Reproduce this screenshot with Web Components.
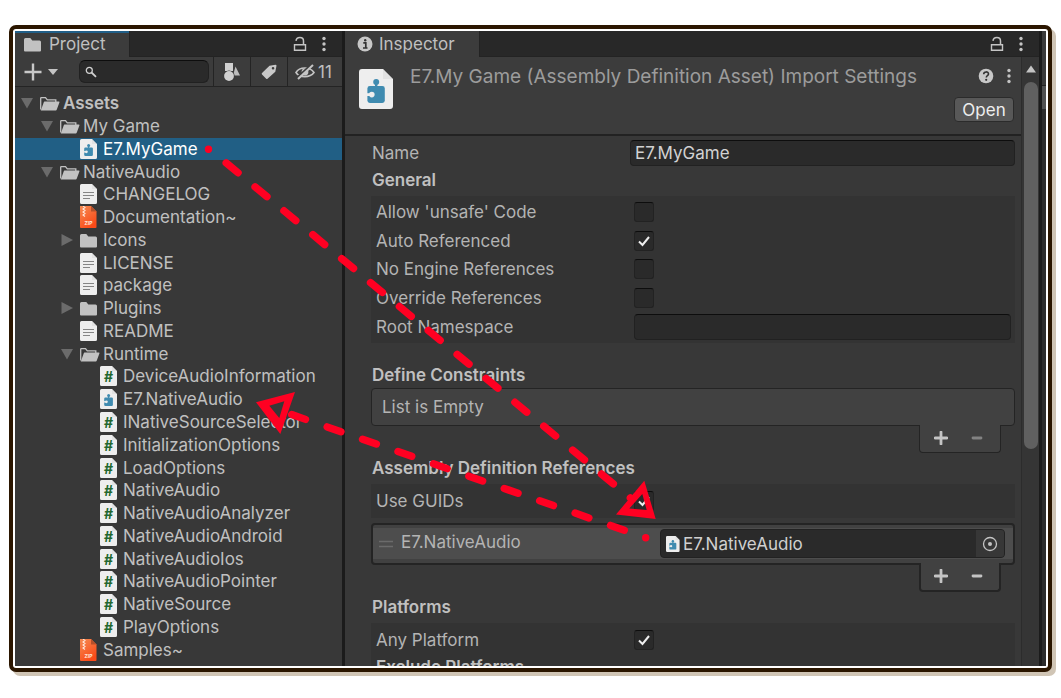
<!DOCTYPE html>
<html lang="en">
<head>
<meta charset="utf-8">
<title>Project and Inspector</title>
<style>
html { background: #fff; }
body { margin: 0; font: 17px/20px Inter, "Liberation Sans", sans-serif; color: #c0c0c0; }
</style>
</head>
<body>
<editor-frame>
  <dock-panel slot="left" class="project" name="Project" icon="folder" active>
    <project-tools slot="tools"></project-tools>
    <tree-view>
      <tree-row depth="0" icon="open" fold="down" strong>Assets</tree-row>
      <tree-row depth="1" icon="open" fold="down">My Game</tree-row>
      <tree-row depth="2" icon="asmdef" selected>E7.MyGame</tree-row>
      <tree-row depth="1" icon="open" fold="down">NativeAudio</tree-row>
      <tree-row depth="2" icon="text">CHANGELOG</tree-row>
      <tree-row depth="2" icon="zip">Documentation~</tree-row>
      <tree-row depth="2" icon="folder" fold="right">Icons</tree-row>
      <tree-row depth="2" icon="text">LICENSE</tree-row>
      <tree-row depth="2" icon="text">package</tree-row>
      <tree-row depth="2" icon="folder" fold="right">Plugins</tree-row>
      <tree-row depth="2" icon="text">README</tree-row>
      <tree-row depth="2" icon="open" fold="down">Runtime</tree-row>
      <tree-row depth="3" icon="script">DeviceAudioInformation</tree-row>
      <tree-row depth="3" icon="asmdef">E7.NativeAudio</tree-row>
      <tree-row depth="3" icon="script">INativeSourceSelector</tree-row>
      <tree-row depth="3" icon="script">InitializationOptions</tree-row>
      <tree-row depth="3" icon="script">LoadOptions</tree-row>
      <tree-row depth="3" icon="script">NativeAudio</tree-row>
      <tree-row depth="3" icon="script">NativeAudioAnalyzer</tree-row>
      <tree-row depth="3" icon="script">NativeAudioAndroid</tree-row>
      <tree-row depth="3" icon="script">NativeAudioIos</tree-row>
      <tree-row depth="3" icon="script">NativeAudioPointer</tree-row>
      <tree-row depth="3" icon="script">NativeSource</tree-row>
      <tree-row depth="3" icon="script">PlayOptions</tree-row>
      <tree-row depth="2" icon="zip">Samples~</tree-row>
    </tree-view>
  </dock-panel>
  <dock-panel slot="main" name="Inspector" icon="info">
    <scroll-area>
      <asset-header>E7.My Game (Assembly Definition Asset) Import Settings</asset-header>
      <inspector-body>
        <prop-row wide label="Name" type="text" value="E7.MyGame"></prop-row>
        <section-title>General</section-title>
        <prop-group class="general">
          <prop-row label="Allow 'unsafe' Code" type="check"></prop-row>
          <prop-row label="Auto Referenced" type="check" checked></prop-row>
          <prop-row label="No Engine References" type="check"></prop-row>
          <prop-row label="Override References" type="check"></prop-row>
          <prop-row label="Root Namespace" type="text"></prop-row>
        </prop-group>
        <section-title spaced>Define Constraints</section-title>
        <list-box empty>List is Empty</list-box>
        <section-title>Assembly Definition References</section-title>
        <prop-group>
          <prop-row label="Use GUIDs" type="check" checked></prop-row>
        </prop-group>
        <list-box class="refs"><reference-item name="E7.NativeAudio"></reference-item></list-box>
        <section-title>Platforms</section-title>
        <prop-group>
          <prop-row label="Any Platform" type="check" checked></prop-row>
          <sub-title>Exclude Platforms</sub-title>
        </prop-group>
      </inspector-body>
    </scroll-area>
  </dock-panel>
  <flow-arrows slot="over"></flow-arrows>
</editor-frame>

<script>
const PAGE = '<path d="M1.500 0H12l5 5v13.500a1.500 1.500 0 0 1-1.500 1.500h-14A1.500 1.500 0 0 1 0 18.500v-17A1.500 1.500 0 0 1 1.500 0z" fill="#eee"/><path d="M12 0l5 5h-5z" fill="#d6d6d6" opacity=".5"/>';
const PUZZLE = '<g fill="#3f8bb0"><rect x="4.200" y="8.500" width="8.700" height="8.500" rx="1.200"/><path d="M8 6h1.200v3H8z"/><circle cx="8.600" cy="6.500" r="1.500"/></g><circle cx="6.400" cy="12.800" r="1.400" fill="#eee"/><path d="M4 12.100h2.200v1.400H4z" fill="#eee"/>';
const ICONS = {
  folder: [20, 20, '<path d="M0 5.500A1.500 1.500 0 0 1 1.500 4h4.800l2 2.500h7.200A1.500 1.500 0 0 1 17 8v8.500a1 1 0 0 1-1 1H1a1 1 0 0 1-1-1z" fill="#c2c2c2"/>'],
  open: [20, 20, '<path d="M.7 16.500V5.200a.6.600 0 0 1 .6-.6h4.200l1.800 2.200h8.500V9" fill="none" stroke="#c2c2c2" stroke-width="1.300"/><path d="M4.500 8.500h14.200a.8.800 0 0 1 .7 1.100l-2.700 7.200a1 1 0 0 1-1 .7H.8l3-8.300a1 1 0 0 1 .7-.7z" fill="#c2c2c2"/>'],
  text: [20, 20, PAGE + '<path d="M3 8.500h11M3 11.500h11M3 14.500h7" stroke="#858585" stroke-width="1.200"/>'],
  asmdef: [20, 20, PAGE + PUZZLE],
  script: [20, 20, PAGE + '<text x="8.500" y="15.500" text-anchor="middle" font-family="Inter,sans-serif" font-weight="700" font-size="14" fill="#23682f">#</text>'],
  zip: [20, 22, '<defs><linearGradient id="g" x2=".6" y2="1"><stop offset="0" stop-color="#f58b52"/><stop offset="1" stop-color="#fa4a18"/></linearGradient></defs><path d="M0 0h11l5.500 5.500V21a1 1 0 0 1-1 1H1a1 1 0 0 1-1-1z" fill="url(#g)"/><path d="M11 0l5.500 5.500H11z" fill="#b5502a"/><path d="M3 0l2 1.500-2 1.500 2 1.500-2 1.500 2 1.500-2 1.500 2 1.500" fill="none" stroke="#ffe6da" stroke-width="1.100"/><text x="8.500" y="18.500" text-anchor="middle" font-family="Inter,sans-serif" font-weight="700" font-size="5" fill="#ffe9df">ZIP</text>'],
  info: [16, 16, '<circle cx="8" cy="8" r="7.500" fill="#c8c8c8"/><path d="M6.300 6.800h2.500v5M6 12h4.500" stroke="#333" stroke-width="1.700" fill="none"/><circle cx="8.200" cy="4.200" r="1.200" fill="#333"/>'],
  help: [16, 16, '<circle cx="8" cy="8" r="7.300" fill="#c8c8c8"/><path d="M5.700 6.200c0-3 4.800-3 4.800-.2 0 1.700-2.200 1.700-2.200 3.400" stroke="#333" stroke-width="1.600" fill="none"/><circle cx="8.200" cy="11.800" r="1.100" fill="#333"/>'],
  lock: [14, 16, '<path d="M1.500 8.700h11v5.600h-11z" fill="none" stroke="#c4c4c4" stroke-width="1.400"/><path d="M3 4.800C3.500.5 10.500.5 10.500 5v3.500" fill="none" stroke="#c4c4c4" stroke-width="1.500"/>'],
  dots: [6, 16, '<g fill="#c4c4c4"><circle cx="3" cy="2.500" r="1.700"/><circle cx="3" cy="8" r="1.700"/><circle cx="3" cy="13.500" r="1.700"/></g>'],
  plus: [18, 18, '<path d="M9 .5v17M.5 9h17" stroke="#c8c8c8" stroke-width="2.400"/>'],
  drop: [12, 8, '<path d="M1 1h10L6 7z" fill="#c4c4c4"/>'],
  search: [12, 12, '<circle cx="4.300" cy="4.300" r="3" fill="none" stroke="#d0d0d0" stroke-width="1.300"/><path d="M6.500 6.500l4.500 4.300" stroke="#d0d0d0" stroke-width="1.800"/>'],
  kinds: [18, 20, '<path d="M2 1h8v8H2z" fill="#d0d0d0"/><path d="M12.500 4.500l4.500 9h-7z" fill="#bdbdbd"/><circle cx="6" cy="14" r="5.600" fill="#383838"/><circle cx="6" cy="14" r="4.900" fill="#d0d0d0"/>'],
  tag: [16, 16, '<path fill-rule="evenodd" d="M8.500 1.800L14.500.7a1 1 0 0 1 1 1l-1.200 6-7.800 7.100a1 1 0 0 1-1.300 0L1 10.500a1 1 0 0 1 0-1.400zM12 3a1.300 1.300 0 1 0 .1 2.600A1.300 1.300 0 0 0 12 3z" fill="#c8c8c8"/>'],
  eye: [20, 18, '<path d="M1 9.500C4.500 3.500 15 3.500 19 9.500 15 15 4.500 15 1 9.500z" fill="none" stroke="#c4c4c4" stroke-width="1.600"/><circle cx="10" cy="9" r="3.400" fill="#c4c4c4"/><path d="M1.500 15L17 1" stroke="#3c3c3c" stroke-width="2"/><path d="M3 16L18 2" stroke="#c4c4c4" stroke-width="2"/>'],
  add: [14, 14, '<path d="M7 1v12M1 7h12" stroke="#c4c4c4" stroke-width="2.800" stroke-linecap="round"/>'],
  minus: [12, 14, '<path d="M2 7h8" stroke="#c4c4c4" stroke-width="2.800" stroke-linecap="round"/>'],
  pick: [16, 16, '<circle cx="8" cy="8" r="6.500" fill="none" stroke="#c4c4c4" stroke-width="1.300"/><circle cx="8" cy="8" r="2" fill="#c4c4c4"/>'],
  grip: [14, 8, '<path d="M0 1.500h14M0 6.500h14" stroke="#6b6b6b" stroke-width="1.400"/>'],
  check: [14, 12, '<path d="M2 6.500l3.500 3.500L12 2" fill="none" stroke="#eee" stroke-width="2"/>'],
  up: [12, 8, '<path d="M1 7.500h10L6 .5z" fill="#c4c4c4"/>'],
  down: [14, 14, '<path d="M1 2h12L7 12.500z" fill="#6b6b6b"/>'],
  right: [14, 14, '<path d="M1.500 1v12L13 7z" fill="#6b6b6b"/>']
};
const icon = (name, w, h) => {
  const [vw, vh, body] = ICONS[name];
  return `<svg aria-hidden="true" width="${w || vw}" height="${h || vh}" viewBox="0 0 ${vw} ${vh}">${body}</svg>`;
};
const BASE = `*{box-sizing:border-box} svg{display:block;flex:none}
button{appearance:none;border:0;background:none;padding:0;margin:0;font:inherit;color:inherit;display:flex;align-items:center;justify-content:center}
input{font:inherit;color:inherit;margin:0}
input[type=text],input[type=search]{appearance:none;width:100%;min-width:0;border:1px solid #212121;border-top-color:#0d0d0d;border-radius:4px;background:#2a2a2a;outline:0}`;
const define = (tag, css, html) => customElements.define(tag, class extends HTMLElement {
  connectedCallback() {
    if (this.shadowRoot) return;
    const root = this.attachShadow({ mode: 'open' });
    root.innerHTML = `<style>${BASE}${css}</style>` + (typeof html === 'function' ? html(this) : html);
  }
});

define('editor-frame', `
:host{display:grid;position:relative;grid-template-columns:327px 3px minmax(0,1fr) 3px 4px;height:calc(100vh - 51px);min-height:560px;margin:25px 9px 26px;border:4px solid #2b1600;border-radius:7px;padding:2px;background:#fff;box-shadow:4px 4px 0 #d0c5b5;box-sizing:border-box}
::slotted(dock-panel){min-height:0;overflow:hidden}
.sep{background:#1b1b1b}
.next{display:grid;grid-template-rows:55px 23px 1fr;background:#2c2c2c}
.next i:first-child{background:#3a3a3a;border-bottom:1px solid #222}
.next i+i{background:#505050}`,
`<slot name="left"></slot><div class="sep"></div><slot name="main"></slot><div class="sep"></div><div class="next"><i></i><i></i></div><slot name="over"></slot>`);

define('dock-panel', `
:host{display:flex;flex-direction:column;background:#383838;min-width:0}
.tabs{display:flex;height:26px;flex:none;background:#282828;border-bottom:1px solid #232323}
.tab{gap:5px;padding:0 24px 0 9px;background:#3c3c3c;height:26px;box-shadow:inset 0 2px var(--mark,transparent);border-right:1px solid #232323}
:host([active]){--mark:#215f88}
:host(:not([active])) .tab{gap:6px;padding-left:12px}
.end{margin-left:auto;display:flex;align-items:center;gap:14px;padding-right:15px}
.body{flex:1;min-height:0;display:flex;flex-direction:column}`,
el => `<div class="tabs"><button class="tab">${icon(el.getAttribute('icon'))}${el.getAttribute('name')}</button>
<div class="end"><button aria-label="Lock">${icon('lock')}</button><button aria-label="Menu">${icon('dots')}</button></div></div>
<slot name="tools"></slot><div class="body"><slot></slot></div>`);

define('project-tools', `
:host{display:flex;flex:none;height:30px;background:#3c3c3c;border-bottom:1px solid #242424;box-sizing:border-box}
.add{gap:5px;padding-left:9px;width:46px;justify-content:flex-start}
.search{display:grid;flex:1;margin:3px 4px 3px 18px;align-items:center}
.search>*{grid-area:1/1}
.search svg{margin-left:6px}
input[type=search]{height:23px;border-radius:6px}
.cell{width:37px;border-left:1px solid #242424}
.hidden{width:55px;gap:3px;justify-content:flex-start;padding-left:7px}`,
`<button class="add" aria-label="Create">${icon('plus')}${icon('drop')}</button>
<div class="search"><input type="search" aria-label="Search">${icon('search')}</div>
<button class="cell" aria-label="Search by type">${icon('kinds')}</button><button class="cell" aria-label="Search by label">${icon('tag')}</button><button class="cell hidden">${icon('eye')}11</button>`);

define('tree-view', `
:host{display:grid;flex:1;min-height:0;grid-auto-rows:minmax(20px,1fr);padding:5px 0 5px}`,
`<slot></slot>`);

define('tree-row', `
:host{display:flex;align-items:center;min-height:0;white-space:nowrap}
:host([selected]){background:#215f85;color:#fff}
:host([strong]){font-weight:600}
.row{display:flex;align-items:center;padding-left:calc(var(--depth)*20px + 5px)}
.fold{width:20px;flex:none}
.text{padding-left:3px}`,
el => `<style>:host{--depth:${el.getAttribute('depth')}}</style><div class="row"><div class="fold">${el.hasAttribute('fold') ? icon(el.getAttribute('fold')) : ''}</div>${icon(el.getAttribute('icon'))}<span class="text"><slot></slot></span></div>`);

define('scroll-area', `
:host{display:grid;flex:1;min-height:0;grid-template-columns:minmax(0,1fr) 18px}
.view{min-height:0;overflow:hidden}
.bar{display:flex;flex-direction:column;align-items:center;background:#353535;border-left:1px solid #2c2c2c;padding-top:8px;gap:9px;min-height:0}
.thumb{width:14px;height:64%;max-height:367px;margin-left:1px;border-radius:7px;background:#606060}
.bar button{height:8px}`,
`<div class="view"><slot></slot></div><div class="bar"><button aria-label="Scroll up">${icon('up')}</button><div class="thumb"></div></div>`);

define('asset-header', `
:host{display:grid;grid-template-columns:34px minmax(0,1fr) auto;column-gap:17px;height:79px;background:#3c3c3c;border-bottom:2px solid #222;padding:12px 7px 0 14px;box-sizing:border-box}
h1{margin:-4px 0 0;font-size:19px;line-height:24px;font-weight:400;color:#9c9c9c;white-space:nowrap}
.side{display:flex;flex-direction:column;align-items:flex-end;gap:13px}
.acts{display:flex;gap:12px;padding-right:2px}
.open{width:60px;height:25px;border:1px solid #2b2b2b;border-radius:4px;background:#585858;color:#eee}
.side{margin-top:-1px}`,
`${icon('asmdef', 40, 40)}<h1><slot></slot></h1><div class="side"><div class="acts"><button aria-label="Help">${icon('help')}</button><button aria-label="More">${icon('dots')}</button></div><button class="open">Open</button></div>`);

define('inspector-body', `:host{display:block;padding:4px 6px 0 26px}`, `<slot></slot>`);
define('section-title', `:host{display:block;font-weight:600;padding:1px 1px 3px}:host([spaced]){padding:19px 1px 0}h2{margin:0;font:inherit;line-height:26px}`, `<h2><slot></slot></h2>`);
define('sub-title', `:host{display:block;font-weight:600;padding-left:5px}h3{margin:0;font:inherit;line-height:24px}`, `<h3><slot></slot></h3>`);
define('prop-group', `
:host{display:grid;grid-auto-rows:minmax(30px,auto);background:#333;padding:2px 0;box-sizing:border-box}
:host(.general){grid-auto-rows:1fr;min-height:147px}`, `<slot></slot>`);

let uid = 0;
define('prop-row', `
:host{display:grid;grid-template-columns:258px minmax(0,1fr);align-items:center;padding:0 4px 0 5px;color:#b4b4b4}
:host([wide]){padding:0 0 0 1px}
input[type=text]{height:26px;padding:0 4px;color:#d2d2d2}
.box{display:grid;width:20px;height:20px;place-items:center}
.box>*{grid-area:1/1}
input[type=checkbox]{appearance:none;width:20px;height:20px;border:1px solid #222;border-top-color:#0d0d0d;border-radius:3px;background:#2a2a2a}
svg{display:none;pointer-events:none}
input:checked+svg{display:block}`,
el => {
  const id = 'f' + (++uid);
  const control = el.getAttribute('type') === 'text'
    ? `<input type="text" id="${id}" value="${el.getAttribute('value') || ''}">`
    : `<span class="box"><input type="checkbox" id="${id}" ${el.hasAttribute('checked') ? 'checked' : ''}>${icon('check')}</span>`;
  return `<label for="${id}">${el.getAttribute('label')}</label>${control}`;
});

define('list-box', `
:host{display:block;padding-bottom:1px;color:#b4b4b4}
:host(.refs){padding-top:5px}
.list{min-height:38px;border:1px solid #242424;border-radius:4px;background:#414141;padding:8px 10px}
:host(.refs) .list{border-width:2px;padding:3px 0 4px}
.foot{display:flex;position:relative;justify-content:space-between;width:82px;height:28px;margin:-1px 14px 0 auto;padding:0 17px 2px 14px;border:1px solid #242424;border-top:0;border-radius:0 0 4px 4px;background:#414141}
:host(.refs) .foot{border-width:0 2px 2px;margin-top:-2px;height:29px;padding:0 16px 1px 13px}
button:disabled{opacity:.5}`,
el => `<div class="list"><slot></slot></div><div class="foot"><button aria-label="Add">${icon('add')}</button><button aria-label="Remove" ${el.hasAttribute('empty') ? 'disabled' : ''}>${icon('minus')}</button></div>`);

define('reference-item', `
:host{display:grid;grid-template-columns:14px 251px minmax(0,1fr);column-gap:8px;align-items:center;height:31px;background:#4d4d4d;padding:0 8px 0 6px;box-sizing:border-box}
label{padding-bottom:4px}
.field{display:grid;grid-template-columns:auto minmax(0,1fr) 28px;align-items:center;height:29px;border:1px solid #222;border-radius:4px;background:#2a2a2a;color:#d0d0d0;padding-left:5px;overflow:hidden}
.field button{height:27px;background:#373737}
.field input[type=text]{border:0;height:24px;padding:0 1px;background:none}`,
el => `${icon('grip')}<label for="ref">${el.getAttribute('name')}</label><div class="field">${icon('asmdef', 16, 16)}<input type="text" id="ref" readonly value="${el.getAttribute('name')}"><button aria-label="Select object">${icon('pick')}</button></div>`);

define('flow-arrows', `
:host{position:absolute;inset:-4px auto auto -4px;pointer-events:none}`,
`<svg aria-hidden="true" width="700" height="560" viewBox="9 25 700 560"><g fill="none" stroke="#ff0022" stroke-width="7.400" stroke-linecap="round">
<path d="M208.500 149.200h.01M226.200 162.900L630.400 498" stroke-dasharray="15.400 22.100"/>
<path d="M645.700 537.700h.01M624.300 530.200L291.500 414.500" stroke-dasharray="14.600 22.900"/></g>
<g fill="#ff0022" fill-rule="evenodd"><path d="M644.300 480.700L655.700 519 616 514.500zM642.300 494L629.300 508.500 646.700 510z"/><path d="M256 402.300L295 392 280.300 434zM269.300 405.700L279.300 418 284.300 401.300z"/></g></svg>`);
</script>
</body>
</html>
